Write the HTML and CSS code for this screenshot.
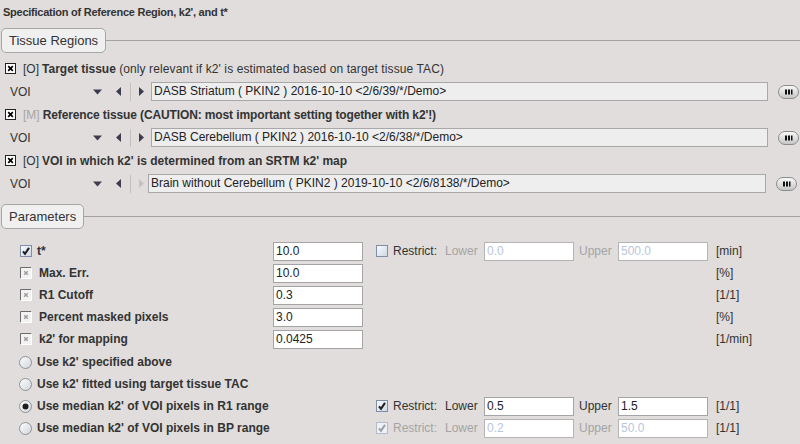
FILE: index.html
```html
<!DOCTYPE html>
<html>
<head>
<meta charset="utf-8">
<link rel="stylesheet" href="styles.css">
</head>
<body>
<svg width="0" height="0" class="defs">
  <defs>
    <linearGradient id="gBox" x1="0" y1="0" x2="1" y2="1">
      <stop offset="0" stop-color="#fbfcfe"/>
      <stop offset="1" stop-color="#ccd6e3"/>
    </linearGradient>
    <linearGradient id="gRad" x1="0" y1="0" x2="1" y2="1">
      <stop offset="0" stop-color="#ffffff"/>
      <stop offset="1" stop-color="#cfd4da"/>
    </linearGradient>
    <linearGradient id="gBtn" x1="0" y1="0" x2="0" y2="1">
      <stop offset="0" stop-color="#fafafa"/>
      <stop offset="1" stop-color="#c4c4c4"/>
    </linearGradient>
  </defs>
</svg>

<div class="title">Specification of Reference Region, k2', and t*</div>

<div class="sec sec-tissue"><span class="tab">Tissue Regions</span><span class="rule"></span></div>

<div class="crow">
  <svg class="cb" width="11" height="11"><rect x="0.5" y="0.5" width="10" height="10" fill="#fff" stroke="#222"/><path d="M3.2 3.2l4.6 4.6M7.8 3.2l-4.6 4.6" stroke="#000" stroke-width="1.7"/></svg>
  <span class="tag">[O]</span><b>Target tissue</b>&nbsp;<span class="reg">(only relevant if k2' is estimated based on target tissue TAC)</span>
</div>
<div class="vrow">
  <span class="vlabel">VOI</span>
  <svg class="down" width="9" height="6"><path d="M0 0.5h9l-4.5 5z" fill="#3c3c4e"/></svg>
  <svg class="left" width="5" height="9"><path d="M5 0v9L0 4.5z" fill="#3c3c4e"/></svg>
  <span class="sep"></span>
  <svg class="right" width="5" height="9"><path d="M0 0v9L5 4.5z" fill="#3c3c4e"/></svg>
  <span class="vfield">DASB Striatum ( PKIN2 ) 2016-10-10 &lt;2/6/39/*/Demo&gt;</span>
  <svg class="more" width="21" height="14"><rect x="0.5" y="0.5" width="20" height="13" rx="6.5" fill="url(#gBtn)" stroke="#8c8c8c"/><rect x="7" y="4.5" width="2" height="5" fill="#111"/><rect x="10" y="4.5" width="2" height="5" fill="#111"/><rect x="13" y="4.5" width="1.5" height="5" fill="#111"/></svg>
</div>

<div class="crow">
  <svg class="cb" width="11" height="11"><rect x="0.5" y="0.5" width="10" height="10" fill="#fff" stroke="#222"/><path d="M3.2 3.2l4.6 4.6M7.8 3.2l-4.6 4.6" stroke="#000" stroke-width="1.7"/></svg>
  <span class="tag tag-dim">[M]</span><b class="tight">Reference tissue (CAUTION: most important setting together with k2'!)</b>
</div>
<div class="vrow">
  <span class="vlabel">VOI</span>
  <svg class="down" width="9" height="6"><path d="M0 0.5h9l-4.5 5z" fill="#3c3c4e"/></svg>
  <svg class="left" width="5" height="9"><path d="M5 0v9L0 4.5z" fill="#3c3c4e"/></svg>
  <span class="sep"></span>
  <svg class="right" width="5" height="9"><path d="M0 0v9L5 4.5z" fill="#3c3c4e"/></svg>
  <span class="vfield">DASB Cerebellum ( PKIN2 ) 2016-10-10 &lt;2/6/38/*/Demo&gt;</span>
  <svg class="more" width="21" height="14"><rect x="0.5" y="0.5" width="20" height="13" rx="6.5" fill="url(#gBtn)" stroke="#8c8c8c"/><rect x="7" y="4.5" width="2" height="5" fill="#111"/><rect x="10" y="4.5" width="2" height="5" fill="#111"/><rect x="13" y="4.5" width="1.5" height="5" fill="#111"/></svg>
</div>

<div class="crow">
  <svg class="cb" width="11" height="11"><rect x="0.5" y="0.5" width="10" height="10" fill="#fff" stroke="#222"/><path d="M3.2 3.2l4.6 4.6M7.8 3.2l-4.6 4.6" stroke="#000" stroke-width="1.7"/></svg>
  <span class="tag">[O]</span><b>VOI in which k2' is determined from an SRTM k2' map</b>
</div>
<div class="vrow vrow-narrow">
  <span class="vlabel">VOI</span>
  <svg class="down" width="9" height="6"><path d="M0 0.5h9l-4.5 5z" fill="#3c3c4e"/></svg>
  <svg class="left" width="5" height="9"><path d="M5 0v9L0 4.5z" fill="#3c3c4e"/></svg>
  <span class="sep"></span>
  <svg class="right" width="5" height="9"><path d="M0 0v9L5 4.5z" fill="#c4c2c6"/></svg>
  <span class="vfield">Brain without Cerebellum ( PKIN2 ) 2019-10-10 &lt;2/6/8138/*/Demo&gt;</span>
  <svg class="more" width="21" height="14"><rect x="0.5" y="0.5" width="20" height="13" rx="6.5" fill="url(#gBtn)" stroke="#8c8c8c"/><rect x="7" y="4.5" width="2" height="5" fill="#111"/><rect x="10" y="4.5" width="2" height="5" fill="#111"/><rect x="13" y="4.5" width="1.5" height="5" fill="#111"/></svg>
</div>

<div class="sec sec-params"><span class="tab">Parameters</span><span class="rule"></span></div>

<div class="params">
  <div class="prow">
    <div class="plabel">
      <svg class="pcb" width="12" height="12"><rect x="0.5" y="0.5" width="11" height="11" fill="url(#gBox)" stroke="#7f8ea6"/><path d="M3 6.3l2 2.6 4-6" fill="none" stroke="#1e1e1e" stroke-width="2"/></svg>
      <span class="pt pt-t">t*</span>
    </div>
    <span class="pfield">10.0</span>
    <div class="restrict">
      <svg class="rcb" width="12" height="12"><rect x="0.5" y="0.5" width="11" height="11" fill="url(#gBox)" stroke="#7f8ea6"/></svg>
      <span class="rl">Restrict:</span>
      <span class="lw dim">Lower</span>
      <span class="pfield off">0.0</span>
      <span class="uw dim">Upper</span>
      <span class="pfield off">500.0</span>
    </div>
    <span class="unit">[min]</span>
  </div>

  <div class="prow">
    <div class="plabel">
      <svg class="pcb" width="12" height="12"><rect x="1" y="1" width="10" height="10" fill="#f3f3f3"/><path d="M0.5 11.5V0.5h11" fill="none" stroke="#6c6c6c"/><path d="M11.5 0.5v11H0.5" fill="none" stroke="#ffffff"/><path d="M4.2 4.2l3.6 3.6M7.8 4.2l-3.6 3.6" stroke="#9c9c9c" stroke-width="1.4"/></svg>
      <span class="pt">Max. Err.</span>
    </div>
    <span class="pfield">10.0</span>
    <div class="restrict"></div>
    <span class="unit">[%]</span>
  </div>

  <div class="prow">
    <div class="plabel">
      <svg class="pcb" width="12" height="12"><rect x="1" y="1" width="10" height="10" fill="#f3f3f3"/><path d="M0.5 11.5V0.5h11" fill="none" stroke="#6c6c6c"/><path d="M11.5 0.5v11H0.5" fill="none" stroke="#ffffff"/><path d="M4.2 4.2l3.6 3.6M7.8 4.2l-3.6 3.6" stroke="#9c9c9c" stroke-width="1.4"/></svg>
      <span class="pt">R1 Cutoff</span>
    </div>
    <span class="pfield">0.3</span>
    <div class="restrict"></div>
    <span class="unit">[1/1]</span>
  </div>

  <div class="prow">
    <div class="plabel">
      <svg class="pcb" width="12" height="12"><rect x="1" y="1" width="10" height="10" fill="#f3f3f3"/><path d="M0.5 11.5V0.5h11" fill="none" stroke="#6c6c6c"/><path d="M11.5 0.5v11H0.5" fill="none" stroke="#ffffff"/><path d="M4.2 4.2l3.6 3.6M7.8 4.2l-3.6 3.6" stroke="#9c9c9c" stroke-width="1.4"/></svg>
      <span class="pt">Percent masked pixels</span>
    </div>
    <span class="pfield">3.0</span>
    <div class="restrict"></div>
    <span class="unit">[%]</span>
  </div>

  <div class="prow">
    <div class="plabel">
      <svg class="pcb" width="12" height="12"><rect x="1" y="1" width="10" height="10" fill="#f3f3f3"/><path d="M0.5 11.5V0.5h11" fill="none" stroke="#6c6c6c"/><path d="M11.5 0.5v11H0.5" fill="none" stroke="#ffffff"/><path d="M4.2 4.2l3.6 3.6M7.8 4.2l-3.6 3.6" stroke="#9c9c9c" stroke-width="1.4"/></svg>
      <span class="pt">k2' for mapping</span>
    </div>
    <span class="pfield">0.0425</span>
    <div class="restrict"></div>
    <span class="unit">[1/min]</span>
  </div>

  <div class="prow prow-first-radio">
    <div class="plabel rlab">
      <svg class="rad" width="13" height="13"><circle cx="6.5" cy="6.5" r="6" fill="url(#gRad)" stroke="#8d9298"/></svg>
      <span class="pt">Use k2' specified above</span>
    </div>
  </div>

  <div class="prow">
    <div class="plabel rlab">
      <svg class="rad" width="13" height="13"><circle cx="6.5" cy="6.5" r="6" fill="url(#gRad)" stroke="#8d9298"/></svg>
      <span class="pt">Use k2' fitted using target tissue TAC</span>
    </div>
  </div>

  <div class="prow">
    <div class="plabel rlab">
      <svg class="rad" width="13" height="13"><circle cx="6.5" cy="6.5" r="6" fill="url(#gRad)" stroke="#8d9298"/><circle cx="6.5" cy="6.5" r="3" fill="#1c1c1c"/></svg>
      <span class="pt">Use median k2' of VOI pixels in R1 range</span>
    </div>
    <span class="pgap"></span>
    <div class="restrict">
      <svg class="rcb" width="12" height="12"><rect x="0.5" y="0.5" width="11" height="11" fill="url(#gBox)" stroke="#7f8ea6"/><path d="M3 6.3l2 2.6 4-6" fill="none" stroke="#1e1e1e" stroke-width="2"/></svg>
      <span class="rl">Restrict:</span>
      <span class="lw">Lower</span>
      <span class="pfield">0.5</span>
      <span class="uw">Upper</span>
      <span class="pfield">1.5</span>
    </div>
    <span class="unit">[1/1]</span>
  </div>

  <div class="prow">
    <div class="plabel rlab">
      <svg class="rad" width="13" height="13"><circle cx="6.5" cy="6.5" r="6" fill="url(#gRad)" stroke="#8d9298"/></svg>
      <span class="pt">Use median k2' of VOI pixels in BP range</span>
    </div>
    <span class="pgap"></span>
    <div class="restrict">
      <svg class="rcb" width="12" height="12"><rect x="0.5" y="0.5" width="11" height="11" fill="#eef1f5" stroke="#b3bcc9"/><path d="M3 6.3l2 2.6 4-6" fill="none" stroke="#9aa0a8" stroke-width="2"/></svg>
      <span class="rl dim">Restrict:</span>
      <span class="lw dim">Lower</span>
      <span class="pfield off">0.2</span>
      <span class="uw dim">Upper</span>
      <span class="pfield off">50.0</span>
    </div>
    <span class="unit">[1/1]</span>
  </div>
</div>
</body>
</html>
```

FILE: styles.css
```css
html, body {
  margin: 0;
  padding: 0;
}
body {
  width: 800px;
  height: 444px;
  overflow: hidden;
  background: #e0dddc;
  font-family: "Liberation Sans", Arial, sans-serif;
  font-size: 12px;
  color: #333333;
}
.defs {
  position: absolute;
  width: 0;
  height: 0;
}
.title {
  height: 28px;
  box-sizing: border-box;
  padding: 5px 0 0 3px;
  line-height: 14px;
  font-size: 11px;
  letter-spacing: -0.25px;
  font-weight: bold;
}
.sec {
  display: flex;
  align-items: center;
  height: 25px;
  padding-left: 1px;
}
.sec-params {
  margin-top: 9px;
}
.tab {
  height: 25px;
  box-sizing: border-box;
  border: 1px solid #a6a6a6;
  border-radius: 5px;
  background: #f0f0f0;
  padding: 0 7px;
  line-height: 23px;
  font-size: 13px;
  color: #333;
}
.rule {
  flex: 1;
  height: 1px;
  background: #a2a2a2;
}

/* tissue rows */
.crow {
  display: flex;
  align-items: center;
  height: 23px;
  padding-left: 5px;
  white-space: pre;
}
.sec-tissue + .crow {
  margin-top: 4px;
}
.crow b {
  font-weight: bold;
}
.crow .tight {
  letter-spacing: -0.12px;
}
.crow .reg {
  letter-spacing: 0.1px;
}
.cb {
  margin-right: 7px;
  flex: none;
}
.tag {
  margin-right: 3px;
}
.tag-dim {
  color: #a6a6a6;
}
.vrow {
  display: flex;
  align-items: center;
  height: 23px;
  padding-left: 10px;
}
.vlabel {
  width: 83px;
}
.down {
  flex: none;
}
.left {
  flex: none;
  margin-left: 14px;
}
.sep {
  width: 1px;
  height: 18px;
  background: #c4c0c0;
  margin-left: 9px;
}
.right {
  flex: none;
  margin-left: 8px;
}
.vfield {
  margin-left: 7px;
  width: 617px;
  height: 19px;
  box-sizing: border-box;
  border: 1px solid #a8a8a8;
  background: #eeeeee;
  padding-left: 2px;
  line-height: 17px;
  color: #222;
  white-space: pre;
}
.vrow-narrow .vfield {
  margin-left: 4px;
  width: 618px;
}
.more {
  flex: none;
  margin-left: 10px;
}

/* parameters */
.params {
  margin-top: 11px;
}
.prow {
  display: grid;
  grid-template-columns: 273px 90px 353px auto;
  align-items: center;
  height: 22px;
}
.prow-first-radio {
  margin-top: 1px;
}
.plabel {
  display: flex;
  align-items: center;
  padding-left: 20px;
  font-weight: bold;
  white-space: pre;
}
.rlab {
  padding-left: 19px;
}
.pcb {
  flex: none;
  margin-right: 7px;
}
.pt-t {
  margin-left: -2px;
}
.rad {
  flex: none;
  margin-right: 5px;
}
.pfield {
  display: block;
  width: 90px;
  height: 19px;
  box-sizing: border-box;
  border: 1px solid #a4a4a4;
  background: #ffffff;
  padding-left: 2px;
  line-height: 17px;
  color: #222;
}
.pfield.off {
  color: #b7c6dc;
  border-color: #b4b4b4;
}
.restrict {
  display: flex;
  align-items: center;
  padding-left: 13px;
  height: 19px;
}
.rcb {
  flex: none;
  margin-right: 5px;
}
.rl {
  width: 52px;
}
.lw, .uw {
  width: 39px;
}
.uw {
  margin-left: 5px;
}
.dim {
  color: #a4a4a4;
}
.unit {
  padding-left: 0;
}
```
